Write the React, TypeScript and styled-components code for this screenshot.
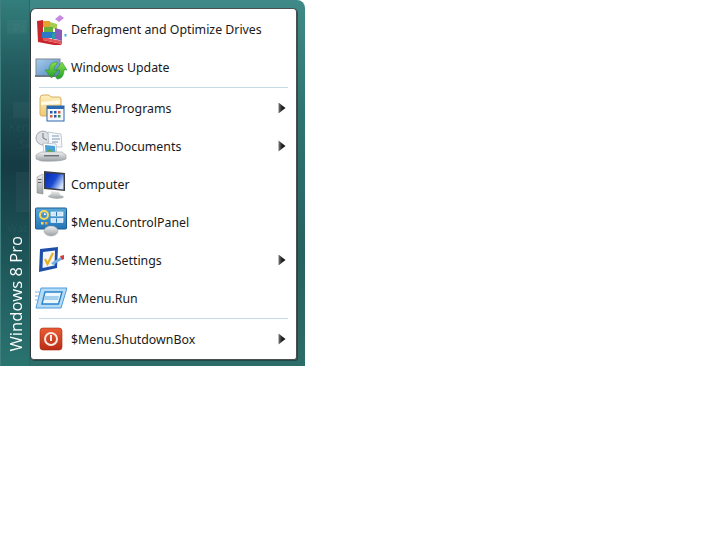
import React from "react";
import styled, { createGlobalStyle } from "styled-components";

const Global = createGlobalStyle`
  html, body { margin: 0; padding: 0; background: #fff; }
  #root { width: 714px; height: 536px; overflow: hidden; background: #fff; }
`;

const Frame = styled.div`
  position: relative;
  box-sizing: border-box;
  width: 305px;
  height: 366px;
  display: flex;
  padding: 8px 8px 6px 0;
  border-radius: 0 8px 0 0;
  overflow: hidden;
  background: linear-gradient(180deg, #3f8a88 0%, #2f7472 30%, #266260 70%, #2c6c69 100%);
`;

const Side = styled.div`
  position: relative;
  width: 30px;
  flex: none;
  display: flex;
  align-items: flex-end;
  justify-content: center;
  margin: -8px 0 -6px;
  padding-bottom: 15px;
  box-sizing: border-box;
  background: linear-gradient(180deg, #337e7c 0%, #235c60 18%, #153b44 45%, #1b5055 65%, #2a7470 100%);
  border-left: 1px solid #3f7f80;
  border-right: 1px solid #2a6664;
`;

const Ghost = styled.svg`
  position: absolute;
  left: 0;
  top: 0;
`;

const Brand = styled.span`
  position: relative;
  writing-mode: vertical-rl;
  transform: rotate(180deg);
  font: 16.6px "Open Sans", "Noto Sans", sans-serif;
  color: #fff;
  white-space: nowrap;
`;

const Panel = styled.div`
  flex: 1;
  box-sizing: border-box;
  display: flex;
  flex-direction: column;
  padding: 1px 0;
  background: #fff;
  border: 1px solid #4a4f52;
  border-left-color: #30383b;
  border-radius: 6px 4px 3px 4px;
  box-shadow: 1px 1px 0 rgba(20, 50, 50, 0.55);
`;

const Row = styled.div`
  height: 38px;
  flex: none;
  display: flex;
  align-items: center;
  padding-left: 4px;
`;

const IconBox = styled.svg`
  width: 32px;
  height: 32px;
  flex: none;
  filter: blur(0.3px);
`;

const Label = styled.span`
  flex: 1;
  margin-left: 4px;
  font: 12.35px "Noto Sans", "Open Sans", sans-serif;
  color: #1a1a1a;
  white-space: nowrap;
`;

const Arrow = styled.svg`
  width: 8px;
  height: 12px;
  margin-right: 10px;
  flex: none;
`;

const Sep = styled.div`
  height: 1px;
  margin: 1px 8px 1px 8px;
  background: #c5d8e4;
  flex: none;
`;

const Grads = () => (
  <svg width="0" height="0" style={{ position: "absolute" }}>
    <defs>
      <linearGradient id="arr" x1="0" x2="1" y1="0" y2="0">
        <stop offset="0" stopColor="#777" />
        <stop offset="0.5" stopColor="#222" />
        <stop offset="1" stopColor="#111" />
      </linearGradient>
      <linearGradient id="scr" x1="0" x2="1" y1="0" y2="1">
        <stop offset="0" stopColor="#a9cdea" />
        <stop offset="1" stopColor="#4e86c4" />
      </linearGradient>
      <linearGradient id="grn" x1="0" x2="0" y1="0" y2="1">
        <stop offset="0" stopColor="#8fe04a" />
        <stop offset="1" stopColor="#1f9e2c" />
      </linearGradient>
      <linearGradient id="fld" x1="0" x2="0" y1="0" y2="1">
        <stop offset="0" stopColor="#fdf0c0" />
        <stop offset="1" stopColor="#f0c870" />
      </linearGradient>
      <linearGradient id="pan" x1="0" x2="0" y1="0" y2="1">
        <stop offset="0" stopColor="#58a8dc" />
        <stop offset="1" stopColor="#2474b4" />
      </linearGradient>
      <linearGradient id="pwr" x1="0" x2="0" y1="0" y2="1">
        <stop offset="0" stopColor="#e85c34" />
        <stop offset="1" stopColor="#b92c14" />
      </linearGradient>
      <linearGradient id="blu" x1="0" x2="1" y1="0" y2="0.6">
        <stop offset="0" stopColor="#0a2cb0" />
        <stop offset="0.55" stopColor="#1a4ad0" />
        <stop offset="1" stopColor="#cfe0f8" />
      </linearGradient>
      <linearGradient id="sil" x1="0" x2="0" y1="0" y2="1">
        <stop offset="0" stopColor="#f0f0f0" />
        <stop offset="1" stopColor="#9aa0a4" />
      </linearGradient>
    </defs>
  </svg>
);

const Defrag = () => (
  <IconBox viewBox="0 0 32 32">
    <path d="M2 8 L8 7 L8 27 L27 31 L24 33 L3 29 Z" fill="#c8262c" />
    <path d="M8 24 L27 28 L27 31 L8 27 Z" fill="#e2555a" />
    <rect x="8" y="8" width="7" height="6" fill="#e8a22c" />
    <path d="M15 9 L22 11 L22 16 L15 15 Z" fill="#a8cc50" />
    <rect x="9" y="14" width="9" height="5" fill="#66b03c" />
    <rect x="7" y="19" width="13" height="6" fill="#2c78c8" />
    <rect x="17" y="20" width="7" height="6" fill="#2a9ea8" />
    <path d="M20 15 L27 17 L27 28 L20 26 Z" fill="#8a5ab8" />
    <path d="M20 6 L25 2 L29 5 L24 9 Z" fill="#c88ae0" />
    <rect x="29.5" y="21" width="2" height="2.5" fill="#4aa8e0" />
  </IconBox>
);

const Update = () => (
  <IconBox viewBox="0 0 32 32">
    <rect x="1" y="8" width="24" height="17" fill="url(#scr)" stroke="#7c8894" strokeWidth="1" />
    <rect x="0" y="24" width="24" height="2" fill="#6e7a86" />
    <path d="M22 11 C17 11 14 14 14 19 L10 19 L16.5 27 L23 19 L19 19 C19 16 20 14 22 13 Z" fill="url(#grn)" stroke="#1d8a2a" strokeWidth="0.5" />
    <path d="M27 11 L21 19 L24.5 19 C24.5 22 23.5 24 21 26 L22 28 C27 28 29 24 29 19 L32 19 Z" fill="url(#grn)" stroke="#1d8a2a" strokeWidth="0.5" />
  </IconBox>
);

const Programs = () => (
  <IconBox viewBox="0 0 32 32">
    <path d="M5 6 Q5 3 8 3 L14 3 L16 5 L24 5 Q26 5 26 7 L26 24 L7 24 Q5 24 5 22 Z" fill="url(#fld)" stroke="#d8b060" />
    <path d="M6 10 L25 8 L25 12 L6 13 Z" fill="#fffbe8" />
    <rect x="12" y="14" width="17" height="15" fill="#f4f8fc" stroke="#2a68b0" />
    <rect x="12" y="14" width="17" height="3" fill="#2a68b0" />
    <rect x="15" y="19" width="2.5" height="2.5" fill="#2458a8" />
    <rect x="19" y="19" width="2.5" height="2.5" fill="#2458a8" />
    <rect x="23" y="19" width="2.5" height="2.5" fill="#d06040" />
    <rect x="15" y="23" width="2.5" height="2.5" fill="#d06040" />
    <rect x="19" y="23" width="2.5" height="2.5" fill="#2458a8" />
    <rect x="23" y="23" width="2.5" height="2.5" fill="#3a8a50" />
  </IconBox>
);

const Documents = () => (
  <IconBox viewBox="0 0 32 32">
    <circle cx="8" cy="8" r="7" fill="#dce0e4" stroke="#a4aab0" />
    <path d="M8 3 L8 8 L12 10" stroke="#777" strokeWidth="1" fill="none" />
    <path d="M13 2 L26 4 L27 17 L14 17 Z" fill="#f6f8fa" stroke="#a8b4c0" strokeWidth="0.7" />
    <path d="M17 6 H24 M17 9 H25 M17 12 H23" stroke="#7a9ab8" />
    <path d="M8 13 L21 14 L22 24 L9 25 Z" fill="#fff" stroke="#a0aab4" strokeWidth="0.6" />
    <path d="M10 15 L20 16 L20.5 23 L10.5 23 Z" fill="#4aa0d8" />
    <path d="M10.5 23 L14 19 L20.5 23 Z" fill="#5aa848" />
    <path d="M1 25 L6 22 L27 22 L31 25 L31 29 Q25 32 6 31 L1 29 Z" fill="url(#sil)" stroke="#9aa0a4" strokeWidth="0.6" />
    <rect x="9" y="25" width="15" height="1.5" fill="#6c747c" />
  </IconBox>
);

const Computer = () => (
  <IconBox viewBox="0 0 32 32">
    <path d="M2 9 L8 6 L8 26 L2 25 Z" fill="url(#sil)" stroke="#7a8084" strokeWidth="0.5" />
    <rect x="3" y="11" width="3.5" height="1" fill="#666" />
    <rect x="3" y="14" width="3.5" height="1" fill="#666" />
    <path d="M9 3 L30 5 L30 23 L9 21 Z" fill="#3a3e44" />
    <path d="M11 5 L28.5 6.5 L28.5 21.5 L11 19.5 Z" fill="url(#blu)" />
    <path d="M16 23 L24 24 L25 27 Q30 28 28 30 Q20 32 13 29 Q13 27 16 26 Z" fill="url(#sil)" />
  </IconBox>
);

const Control = () => (
  <IconBox viewBox="0 0 32 32">
    <rect x="0.5" y="2" width="31" height="21" rx="1" fill="url(#pan)" stroke="#1c5a90" />
    <circle cx="9" cy="9" r="4" fill="none" stroke="#f8d858" strokeWidth="2" />
    <path d="M9 7 A2 2 0 0 1 11 9 L9 9 Z" fill="#fff" />
    <rect x="6" y="16" width="2.5" height="2.5" fill="#f8d858" />
    <rect x="10" y="16" width="2.5" height="2.5" fill="#f0a040" />
    <rect x="16" y="6" width="12" height="4" fill="#cfe6f8" stroke="#fff" strokeWidth="0.6" />
    <rect x="16" y="12.5" width="12" height="4" fill="#cfe6f8" stroke="#fff" strokeWidth="0.6" />
    <rect x="21" y="6" width="1" height="4" fill="#2a78b8" />
    <rect x="21" y="12.5" width="1" height="4" fill="#2a78b8" />
    <ellipse cx="16" cy="25" rx="7" ry="5" fill="url(#sil)" stroke="#9aa0a6" strokeWidth="0.5" />
  </IconBox>
);

const Settings = () => (
  <IconBox viewBox="0 0 32 32">
    <path d="M5 5 L23 3 L22 24 L4 28 Z" fill="#1e4fa8" />
    <path d="M8 8 L20 6.5 L19.5 21.5 L7.5 24 Z" fill="#f2f6fc" />
    <path d="M10 15 L12.5 20 L18 9" fill="none" stroke="#e8b020" strokeWidth="2.2" />
    <path d="M16 19 L26 13 L28 15 L18 21 Z" fill="#7ab0e0" />
    <path d="M25 12 L29 11 L29 15 L27 16 Z" fill="#d83a3a" />
  </IconBox>
);

const RunIcon = () => (
  <IconBox viewBox="0 0 32 32">
    <path d="M6 6 L32 6 L26 26 L1 26 Z" fill="#b4daf4" stroke="#4a9ce0" strokeWidth="1" />
    <path d="M10 10 L27 10 L23.5 22 L7 22 Z" fill="#eef7fd" stroke="#2a84d0" strokeWidth="1.4" />
    <path d="M10 14 L24 14 L23 18 L9 18 Z" fill="#a4d0f0" />
    <path d="M0 10 H5 M0 14 H4 M0 18 H3" stroke="#7ab8e8" strokeWidth="1" />
  </IconBox>
);

const Shutdown = () => (
  <IconBox viewBox="0 0 32 32">
    <rect x="5" y="5" width="22" height="22" rx="3" fill="url(#pwr)" stroke="#a82c14" strokeWidth="0.6" />
    <circle cx="16" cy="16" r="6" fill="none" stroke="#fbe8e0" strokeWidth="2" />
    <rect x="15" y="12" width="2" height="6" fill="#fbe8e0" />
  </IconBox>
);

const ChevronMark = () => (
  <Arrow viewBox="0 0 8 12">
    <path d="M0.5 0.5 L7.5 6 L0.5 11.5 Z" fill="url(#arr)" />
  </Arrow>
);

type Item = { icon: React.ReactNode; label: string; arrow?: boolean };

const groups: Item[][] = [
  [
    { icon: <Defrag />, label: "Defragment and Optimize Drives" },
    { icon: <Update />, label: "Windows Update" },
  ],
  [
    { icon: <Programs />, label: "$Menu.Programs", arrow: true },
    { icon: <Documents />, label: "$Menu.Documents", arrow: true },
    { icon: <Computer />, label: "Computer" },
    { icon: <Control />, label: "$Menu.ControlPanel" },
    { icon: <Settings />, label: "$Menu.Settings", arrow: true },
    { icon: <RunIcon />, label: "$Menu.Run" },
  ],
  [{ icon: <Shutdown />, label: "$Menu.ShutdownBox", arrow: true }],
];

export default function App() {
  return (
    <>
      <Global />
      <Grads />
      <Frame>
        <Side>
          <Ghost width="30" height="366" viewBox="0 0 30 366">
            <g fill="#ffffff" fillOpacity="0.035">
              <rect x="12" y="102" width="16" height="16" />
              <rect x="15" y="172" width="14" height="40" />
              <rect x="6" y="20" width="20" height="14" />
            </g>
            <g fill="#ffffff" fillOpacity="0.06" fontFamily="Open Sans, sans-serif" fontSize="11">
              <text x="12" y="32">Pa</text>
              <text x="8" y="131">Ken</text>
              <text x="18" y="148">Sa</text>
              <text x="6" y="232">Wat</text>
            </g>
          </Ghost>
          <Brand>Windows 8 Pro</Brand>
        </Side>
        <Panel>
          {groups.map((g, i) => (
            <React.Fragment key={i}>
              {i > 0 && <Sep />}
              {g.map((it) => (
                <Row key={it.label}>
                  {it.icon}
                  <Label>{it.label}</Label>
                  {it.arrow && <ChevronMark />}
                </Row>
              ))}
            </React.Fragment>
          ))}
        </Panel>
      </Frame>
    </>
  );
}
